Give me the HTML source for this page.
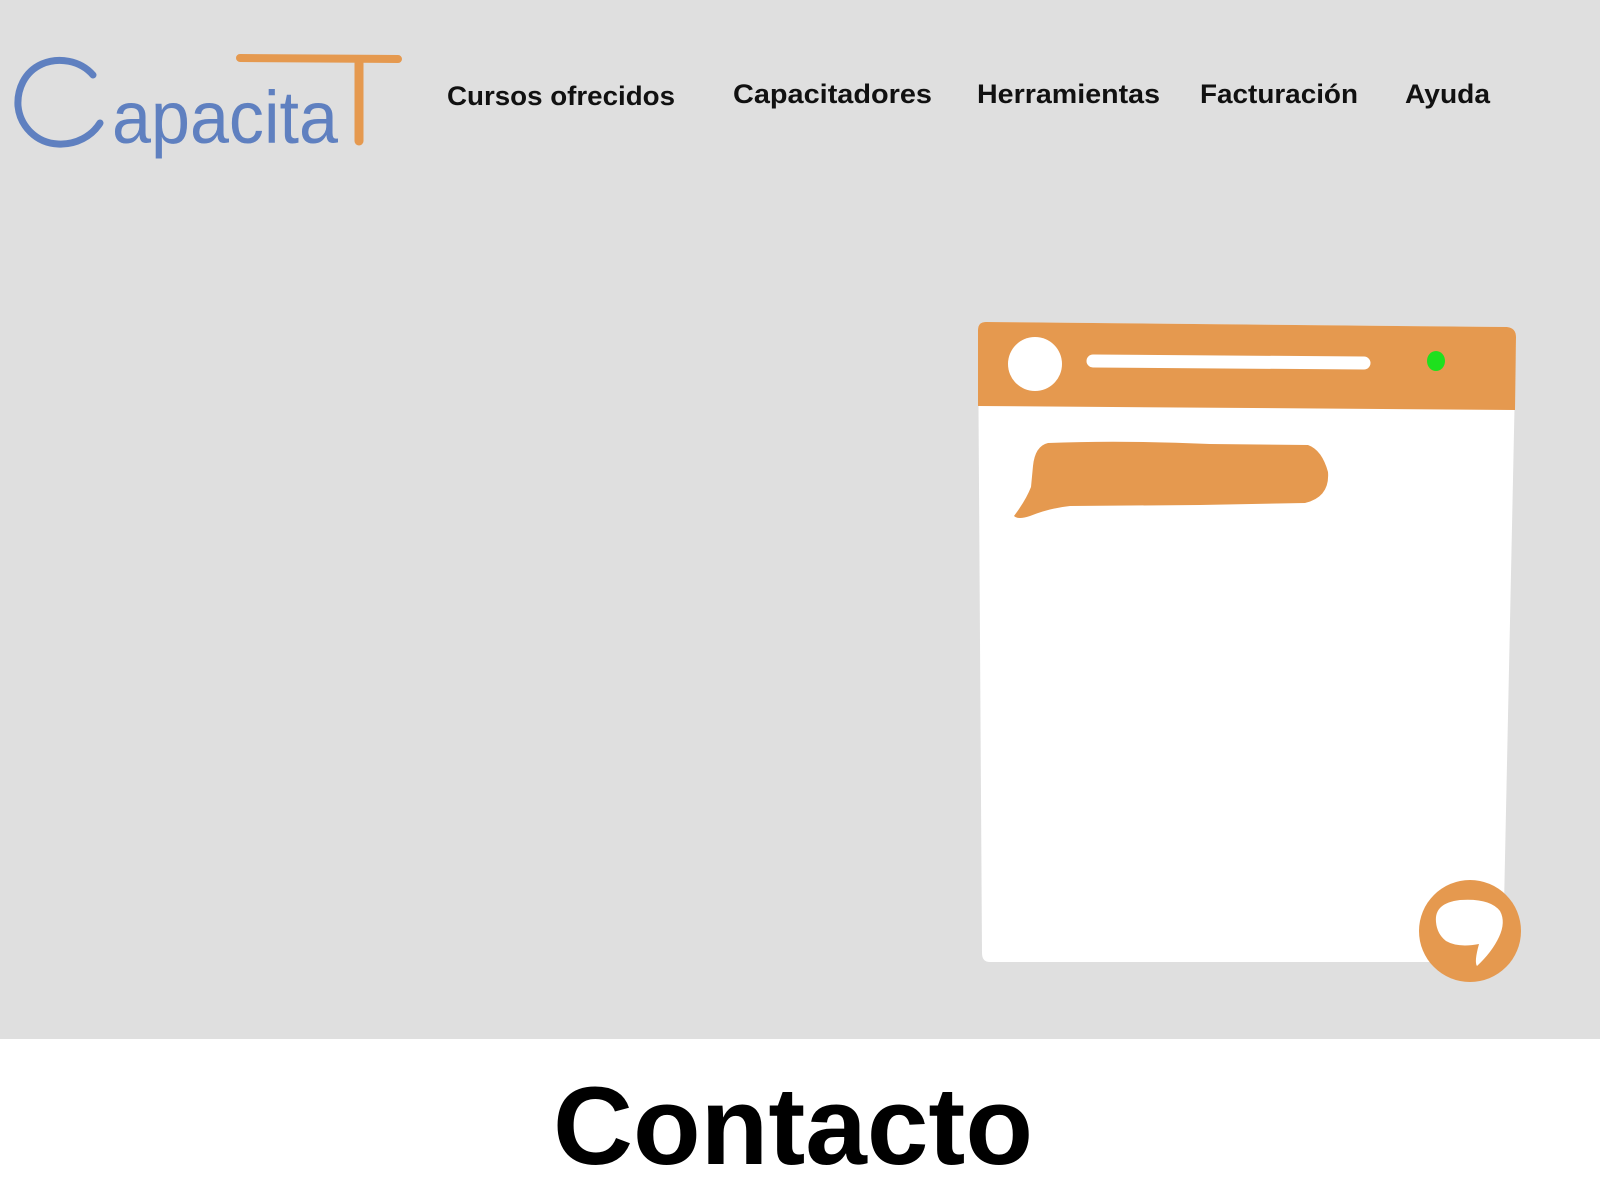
<!DOCTYPE html>
<html><head><meta charset="utf-8"><style>
html,body{margin:0;padding:0;width:1600px;height:1200px;overflow:hidden;background:#fff}
svg{display:block}
</style></head><body>
<svg width="1600" height="1200" viewBox="0 0 1600 1200" xmlns="http://www.w3.org/2000/svg">
<rect x="0" y="0" width="1600" height="1039" fill="#dfdfdf"/>
<rect x="0" y="1039" width="1600" height="161" fill="#ffffff"/>

<!-- logo -->
<path d="M93 75 C80 60 58 57 42 64 C24 72 17 90 18 106 C20 126 36 143 58 144 C76 145 92 136 100 123" fill="none" stroke="#5f80c0" stroke-width="7" stroke-linecap="round"/>
<text x="112" y="143" font-family="'Liberation Sans Narrow','Liberation Sans',sans-serif" font-size="74" fill="#5f80c0" textLength="226" lengthAdjust="spacingAndGlyphs">apacita</text>
<line x1="240" y1="58" x2="398" y2="59" stroke="#e5994f" stroke-width="8" stroke-linecap="round"/>
<line x1="359" y1="60" x2="359" y2="141" stroke="#e5994f" stroke-width="9" stroke-linecap="round"/>

<!-- nav -->
<g font-family="'Liberation Sans',sans-serif" font-size="27" font-weight="bold" fill="#111">
<text x="447" y="105" textLength="228" lengthAdjust="spacingAndGlyphs">Cursos ofrecidos</text>
<text x="733" y="103" textLength="199" lengthAdjust="spacingAndGlyphs">Capacitadores</text>
<text x="977" y="103" textLength="183" lengthAdjust="spacingAndGlyphs">Herramientas</text>
<text x="1200" y="103" textLength="158" lengthAdjust="spacingAndGlyphs">Facturación</text>
<text x="1405" y="103" textLength="85" lengthAdjust="spacingAndGlyphs">Ayuda</text>
</g>

<!-- chat card -->
<path d="M986 322 L1507 327 Q1516 328 1516 337 L1503 953 Q1503 962 1494 962 L990 962 Q982 962 982 953 L978 330 Q978 322 986 322 Z" fill="#ffffff"/>
<path d="M986 322 L1507 327 Q1516 328 1516 337 L1515 410 L978 406 L978 330 Q978 322 986 322 Z" fill="#e5994f"/>
<circle cx="1035" cy="364" r="27" fill="#ffffff"/>
<line x1="1093" y1="361" x2="1364" y2="363" stroke="#ffffff" stroke-width="13" stroke-linecap="round"/>
<ellipse cx="1436" cy="361" rx="9" ry="10" fill="#1ee01e"/>
<path d="M1048 443 Q1120 440 1210 444 L1308 445 Q1322 450 1328 472 Q1330 497 1305 503 L1200 505 L1070 506 Q1050 508 1030 516 Q1018 520 1014 516 Q1026 500 1031 487 L1033 466 Q1035 446 1048 443 Z" fill="#e5994f"/>

<!-- chat button -->
<circle cx="1470" cy="931" r="51" fill="#e5994f"/>
<path d="M1436 922 Q1434 903 1460 900 Q1490 898 1500 911 Q1506 922 1499 937 Q1492 952 1477 966 Q1474 962 1479 944 Q1458 948 1446 941 Q1437 934 1436 922 Z" fill="#ffffff"/>

<!-- heading -->
<text x="553" y="1164" font-family="'Liberation Sans',sans-serif" font-size="110" font-weight="bold" fill="#000" textLength="480" lengthAdjust="spacingAndGlyphs">Contacto</text>
</svg>
</body></html>
